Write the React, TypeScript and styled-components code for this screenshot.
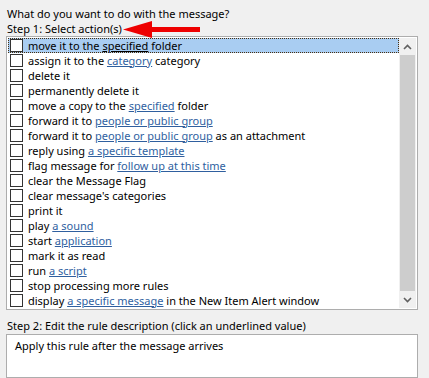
import { FC, ReactNode } from 'react';
import styled, { createGlobalStyle } from 'styled-components';

type Part = string | { link: string; plain?: boolean };

type Action = {
	parts: Part[];
	selected?: boolean;
};

const ACTIONS: Action[] = [
	{ parts: ['move it to the ', { link: 'specified', plain: true }, ' folder'], selected: true },
	{ parts: ['assign it to the ', { link: 'category' }, ' category'] },
	{ parts: ['delete it'] },
	{ parts: ['permanently delete it'] },
	{ parts: ['move a copy to the ', { link: 'specified' }, ' folder'] },
	{ parts: ['forward it to ', { link: 'people or public group' }] },
	{ parts: ['forward it to ', { link: 'people or public group' }, ' as an attachment'] },
	{ parts: ['reply using ', { link: 'a specific template' }] },
	{ parts: ['flag message for ', { link: 'follow up at this time' }] },
	{ parts: ['clear the Message Flag'] },
	{ parts: ["clear message's categories"] },
	{ parts: ['print it'] },
	{ parts: ['play ', { link: 'a sound' }] },
	{ parts: ['start ', { link: 'application' }] },
	{ parts: ['mark it as read'] },
	{ parts: ['run ', { link: 'a script' }] },
	{ parts: ['stop processing more rules'] },
	{ parts: ['display ', { link: 'a specific message' }, ' in the New Item Alert window'] },
];

const renderParts = (parts: Part[]): ReactNode =>
	parts.map((p, i) =>
		typeof p === 'string' ? (
			<span key={i}>{p}</span>
		) : (
			<Link key={i} plain={p.plain}>
				{p.link}
			</Link>
		)
	);

const Chevron: FC<{ down?: boolean }> = ({ down }) => (
	<svg width="9" height="6" viewBox="0 0 9 6">
		<path
			d={down ? 'M1 1 L4.5 4.5 L8 1' : 'M1 5 L4.5 1.5 L8 5'}
			fill="none"
			stroke="#606060"
			strokeWidth="1.6"
		/>
	</svg>
);

const RedArrow: FC = () => (
	<ArrowSvg width="78" height="18" viewBox="0 0 78 18">
		<polygon points="0,8.5 29,0 29,6 77,6 77,11 29,11 29,17" fill="#ee0000" />
	</ArrowSvg>
);

export const App: FC = () => (
	<>
		<GlobalStyle />
		<Dialog>
			<Label>What do you want to do with the message?</Label>
			<StepLabel>
				Step 1: Select action(s)
				<RedArrow />
			</StepLabel>
			<ListBox>
				<Rows>
					{ACTIONS.map((a, i) => (
						<Row key={i} selected={a.selected}>
							<Check />
							<RowText>{renderParts(a.parts)}</RowText>
						</Row>
					))}
				</Rows>
				<ScrollBar>
					<ScrollButton>
						<Chevron />
					</ScrollButton>
					<Thumb />
					<ScrollButton>
						<Chevron down />
					</ScrollButton>
				</ScrollBar>
			</ListBox>
			<Step2Label>Step 2: Edit the rule description (click an underlined value)</Step2Label>
			<DescBox>Apply this rule after the message arrives</DescBox>
		</Dialog>
	</>
);

const GlobalStyle = createGlobalStyle`
	html, body {
		margin: 0;
		padding: 0;
		background: #f0f0f0;
	}
	body {
		font-family: 'Noto Sans', 'Open Sans', sans-serif;
		font-size: 11px;
		color: #000;
	}
`;

const Dialog = styled.div`
	width: 429px;
	height: 378px;
	overflow: hidden;
	padding: 6px 0 0 6px;
	box-sizing: border-box;
	display: flex;
	flex-direction: column;
`;

const Label = styled.div`
	height: 16px;
	line-height: 15px;
	padding-left: 1px;
`;

const StepLabel = styled.div`
	height: 16px;
	line-height: 15px;
	padding-left: 1px;
	position: relative;
`;

const ArrowSvg = styled.svg`
	position: absolute;
	left: 117px;
	top: 0px;
`;

const ListBox = styled.div`
	width: 412px;
	height: 274px;
	box-sizing: border-box;
	border: 1px solid #adadad;
	background: #fff;
	display: flex;
	padding: 1px;
`;

const Rows = styled.div`
	flex: 1;
	display: flex;
	flex-direction: column;
	overflow: hidden;
`;

const Row = styled.div<{ selected?: boolean }>`
	height: 15px;
	flex: 0 0 15px;
	box-sizing: border-box;
	display: flex;
	align-items: center;
	padding-left: 2px;
	white-space: nowrap;
	background: ${(p) => (p.selected ? '#a9cdf2' : 'transparent')};
	outline: ${(p) => (p.selected ? '1px dotted #4a3010' : 'none')};
	outline-offset: -1px;
`;

const Check = styled.span`
	width: 13px;
	height: 13px;
	box-sizing: border-box;
	border: 1px solid #333;
	background: #fff;
	flex: none;
	margin-right: 5px;
`;

const RowText = styled.span`
	line-height: 14px;
`;

const Link = styled.span<{ plain?: boolean }>`
	color: ${(p) => (p.plain ? '#000' : '#2f5f9f')};
	text-decoration: underline;
	text-underline-offset: 1px;
`;

const ScrollBar = styled.div`
	width: 17px;
	flex: none;
	display: flex;
	flex-direction: column;
	background: #f0f0f0;
`;

const ScrollButton = styled.div`
	height: 17px;
	display: flex;
	align-items: center;
	justify-content: center;
`;

const Thumb = styled.div`
	flex: 1;
	background: #cdcdcd;
	margin: 0 1px;
`;

const Step2Label = styled.div`
	height: 24px;
	box-sizing: border-box;
	padding: 8px 0 0 1px;
	line-height: 16px;
`;

const DescBox = styled.div`
	width: 412px;
	height: 60px;
	box-sizing: border-box;
	border: 1px solid #adadad;
	background: #fff;
	padding: 3px 8px;
	line-height: 15px;
`;

export default App;
